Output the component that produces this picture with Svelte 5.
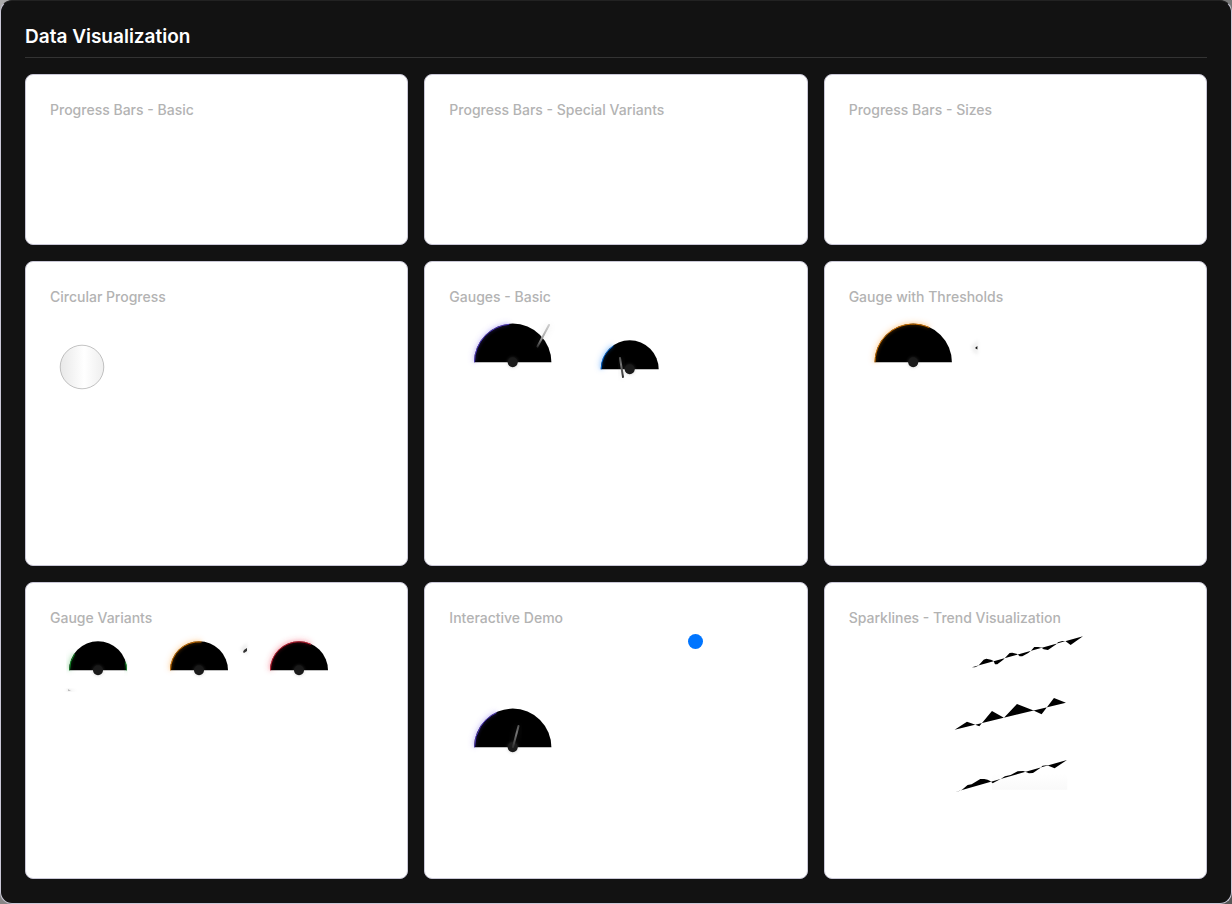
<script>
  let level = $state(75);
  const id = (name) => name.toLowerCase().replace(/[^a-z]+/g, '-');

  const point = (g, deg, r) => {
    const a = (deg * Math.PI) / 180;
    return `${g.x + r * Math.cos(a)} ${g.y - r * Math.sin(a)}`;
  };
  const arc = (g, from, to) => `M${point(g, from, g.r - 0.5)} A${g.r - 0.5} ${g.r - 0.5} 0 0 1 ${point(g, to, g.r - 0.5)}`;

  const rows = [
    {
      size: 'short',
      height: 99,
      cards: [
        { title: 'Progress Bars - Basic' },
        { title: 'Progress Bars - Special Variants' },
        { title: 'Progress Bars - Sizes' }
      ]
    },
    {
      size: 'tall',
      height: 233,
      cards: [
        { title: 'Circular Progress', ring: true },
        {
          title: 'Gauges - Basic',
          gauges: [
            { x: 63.7, y: 54.3, r: 38.7, color: '#6246ea', glow: 0.18, arcs: [[180, 95]], needle: [100, 17, 88.5, 38.5] },
            { x: 180.7, y: 61.3, r: 29, color: '#007aff', glow: 0.25, arcs: [[180, 125]], needle: [171, 50, 174, 69] }
          ]
        },
        {
          title: 'Gauge with Thresholds',
          gauges: [{ x: 64.2, y: 54.3, r: 38.7, color: '#ff8c00', glow: 0.22, arcs: [[180, 65]] }],
          speck: 'threshold'
        }
      ]
    },
    {
      size: 'medium',
      height: 225,
      cards: [
        {
          title: 'Gauge Variants',
          gauges: [
            { x: 48, y: 41.3, r: 29, color: '#16a52d', glow: 0.2, arcs: [[180, 145], [16, 0]] },
            { x: 149, y: 41.3, r: 29, color: '#ff8c00', glow: 0.22, arcs: [[180, 85]] },
            { x: 249, y: 41.3, r: 29, color: '#ef233c', glow: 0.28, arcs: [[180, 65]] }
          ],
          speck: 'variants'
        },
        {
          title: 'Interactive Demo',
          slider: true,
          gauges: [{ x: 63.7, y: 118.3, r: 38.7, color: '#6246ea', glow: 0.18, arcs: [[180, 115]], needle: [69.5, 97, 64, 118] }]
        },
        { title: 'Sparklines - Trend Visualization', lines: true }
      ]
    }
  ];
</script>

{#snippet gauge(g)}
  <g>
    {#each g.arcs as [from, to]}
      <path d={arc(g, from, to)} fill="none" stroke={g.color} stroke-width="4" opacity={g.glow} filter="url(#glow)" />
    {/each}
    <path d="M{g.x - g.r} {g.y}A{g.r} {g.r} 0 0 1 {g.x + g.r} {g.y}Z" fill="#000" />
    {#each g.arcs as [from, to]}
      <path d={arc(g, from, to)} fill="none" stroke={g.color} stroke-width="3" opacity="0.2" filter="url(#soft)" />
      <path d={arc(g, from, to)} fill="none" stroke={g.color} stroke-width="1" opacity="0.75" />
    {/each}
    <circle cx={g.x} cy={g.y} r="5.5" fill="#777" opacity="0.25" filter="url(#soft)" />
    <circle cx={g.x} cy={g.y} r="5" fill="#1a1a1a" />
    {#if g.needle}
      <path d="M{g.needle[0]} {g.needle[1]}L{g.needle[2]} {g.needle[3]}" stroke="#888" stroke-width="4" opacity="0.12" filter="url(#glow)" />
      <path d="M{g.needle[0]} {g.needle[1]}L{g.needle[2]} {g.needle[3]}" stroke={g.needle[0] === 100 ? 'url(#far-needle)' : 'url(#needle)'} stroke-width="2" stroke-linecap="round" />
    {/if}
  </g>
{/snippet}

<svg class="defs" width="0" height="0" aria-hidden="true">
  <defs>
    <filter id="glow" x="-60%" y="-60%" width="220%" height="220%"><feGaussianBlur stdDeviation="3" /></filter>
    <filter id="soft" x="-40%" y="-40%" width="180%" height="180%"><feGaussianBlur stdDeviation="1.5" /></filter>
    <linearGradient id="needle" x1="0" y1="0" x2="0" y2="1"><stop stop-color="#555" /><stop offset=".35" stop-color="#777" /><stop offset="1" stop-color="#333" /></linearGradient>
    <linearGradient id="far-needle" x1="0" y1="0" x2="0" y2="1"><stop stop-color="#ccc" /><stop offset=".55" stop-color="#aaa" /><stop offset="1" stop-color="#333" /></linearGradient>
    <linearGradient id="ring"><stop stop-color="#e8e8e8" /><stop offset=".55" stop-color="#fff" /><stop offset="1" stop-color="#eeeeee" /></linearGradient>
    <linearGradient id="trail" x1="0" y1="0" x2="0" y2="1"><stop stop-color="#fff" /><stop offset="1" stop-color="#f9f9f9" /></linearGradient>
  </defs>
</svg>

<main class="panel">
  <h1>Data Visualization</h1>
  <div class="rows">
    {#each rows as row}
      <div class="row">
        {#each row.cards as card}
          <section class="card" aria-labelledby={id(card.title)}>
            <h2 id={id(card.title)}>{card.title}</h2>
            <div class="body {row.size}">
              {#if card.slider}
                <input type="range" min="0" max="100" bind:value={level} aria-labelledby={id(card.title)} />
              {/if}
              {#if card.gauges || card.ring || card.lines}
                <svg class="chart" class:under={card.slider} viewBox="0 0 333 {row.height}" width="333" height={row.height} aria-hidden="true">
                  {#if card.ring}
                    <circle cx="32" cy="59" r="21.8" fill="url(#ring)" stroke="#888" stroke-width=".5" />
                  {/if}
                  {#each card.gauges ?? [] as g}
                    {@render gauge(g)}
                  {/each}
                  {#if card.speck === 'threshold'}
                    <path d="M122 38L129 32V47L124 44Z" fill="#888" opacity=".12" filter="url(#soft)" />
                    <path d="M126 40l2.4-2v3.4z" fill="#111" />
                  {:else if card.speck === 'variants'}
                    <path d="M190 20l7-6v12z" fill="#888" opacity=".16" filter="url(#soft)" />
                    <path d="M193 23l1-2 3-2v3l-3 2z" fill="#333" />
                    <path d="M17 60l3 1 6 1h-9z" fill="#888" opacity=".35" filter="url(#soft)" />
                    <path d="M18 60l3 2h-3z" fill="#bbb" />
                  {/if}
                  {#if card.lines}
                    <g transform="translate(91.3 -4) scale(.3333)">
                      <path d="M95 127L104 127L114 122L130 104L138 101L152 104L160 108L164 118L171 118L189 104L193 100L208 84L216 83L231 87L238 94L246 94L264 84L272 77L282 66L294 66L304 68L310 73L323 75L348 58L353 52L366 48L376 49L391 60L428 34Z" />
                    </g>
                    <g transform="translate(91.3 61) scale(.3333)">
                      <path d="M155 252H381V299H155Z" fill="url(#trail)" />
                      <path d="M43 119L80 95L97 101L117 109L155 63L191 83L230 42L278 61L304 73L341 24L377 38Z" />
                      <path d="M47 305L57 303L65 299L82 285L94 283L120 267L132 267L142 269L151 274L157 280L181 267L194 259L211 255L232 244L249 243L266 250L278 249L299 235L307 227L320 226L343 235L380 210Z" />
                    </g>
                  {/if}
                </svg>
              {/if}
            </div>
          </section>
        {/each}
      </div>
    {/each}
  </div>
</main>

<style>
  :global(body) {
    margin: 0;
    background: linear-gradient(135deg, #aaa, #555);
    font-family: Inter, sans-serif;
  }
  .defs { position: absolute; }
  .panel {
    box-sizing: border-box;
    min-height: 100vh;
    padding: 24px;
    border: 1px solid #c9c7d6;
    border-top-color: #222;
    border-radius: 12px;
    background: #121212;
  }
  h1 {
    margin: 0 0 16px;
    padding-bottom: 8px;
    border-bottom: 1px solid #333;
    color: #fff;
    font-size: 19px;
    font-weight: 600;
    line-height: 24px;
  }
  .rows { display: grid; gap: 16px; }
  .row { display: grid; grid-template-columns: repeat(3, minmax(0, 1fr)); gap: 16px; }
  .card {
    padding: 24px;
    border: 1px solid #c9c7d6;
    border-radius: 8px;
    background: #fff;
  }
  h2 {
    margin: 0;
    color: #b3b3b3;
    font-size: 14px;
    font-weight: 500;
    line-height: 22px;
  }
  .body { display: flex; flex-direction: column; }
  .short { min-height: 99px; }
  .tall { min-height: 233px; }
  .medium { min-height: 225px; }
  .chart { display: block; overflow: visible; }
  .under { margin-top: -21px; pointer-events: none; }
  input {
    width: 100%;
    height: 16px;
    margin: 5px 0 0;
    appearance: none;
    background: transparent;
  }
  input::-webkit-slider-runnable-track { height: 16px; background: transparent; }
  input::-webkit-slider-thumb {
    width: 15px;
    height: 15px;
    border: 0;
    border-radius: 50%;
    appearance: none;
    background: #0075ff;
  }
</style>
